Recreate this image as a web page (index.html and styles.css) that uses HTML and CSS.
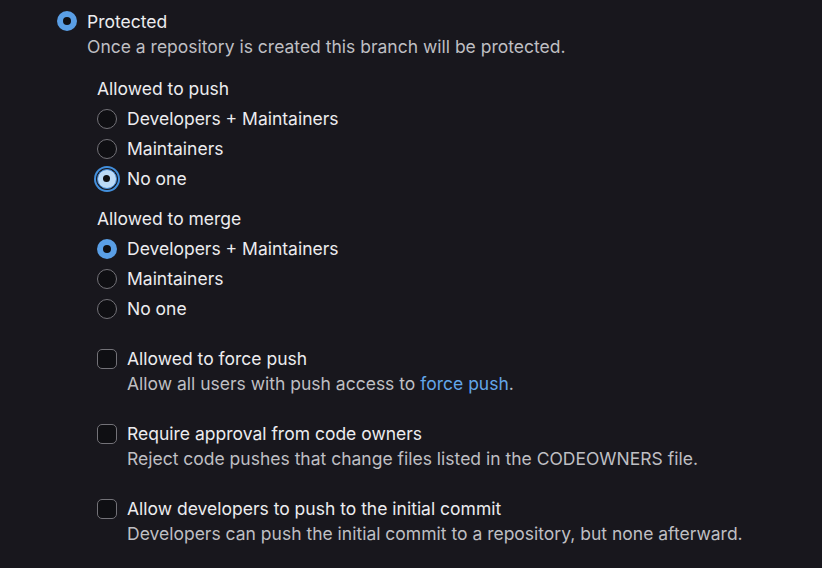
FILE: index.html
```html
<!DOCTYPE html>
<html>
<head>
<meta charset="utf-8">
<link rel="stylesheet" href="styles.css">
</head>
<body>
<div class="page">
  <p class="help top-line">Both developers and maintainers can push new commits, force push, or delete the branch.</p>

  <div class="option main">
    <span class="radio checked"></span>
    <div class="text">
      <div class="label">Protected</div>
      <div class="help">Once a repository is created this branch will be protected.</div>
    </div>
  </div>

  <div class="sub">
    <div class="heading">Allowed to push</div>
    <div class="option row"><span class="radio"></span><div class="label">Developers + Maintainers</div></div>
    <div class="option row"><span class="radio"></span><div class="label">Maintainers</div></div>
    <div class="option row"><span class="radio focused"></span><div class="label">No one</div></div>

    <div class="heading second">Allowed to merge</div>
    <div class="option row"><span class="radio checked"></span><div class="label">Developers + Maintainers</div></div>
    <div class="option row"><span class="radio"></span><div class="label">Maintainers</div></div>
    <div class="option row"><span class="radio"></span><div class="label">No one</div></div>

    <div class="option check-row">
      <span class="checkbox"></span>
      <div class="text">
        <div class="label">Allowed to force push</div>
        <div class="help">Allow all users with push access to <a class="link" href="#">force push</a>.</div>
      </div>
    </div>
    <div class="option check-row">
      <span class="checkbox"></span>
      <div class="text">
        <div class="label">Require approval from code owners</div>
        <div class="help">Reject code pushes that change files listed in the CODEOWNERS file.</div>
      </div>
    </div>
    <div class="option check-row">
      <span class="checkbox"></span>
      <div class="text">
        <div class="label">Allow developers to push to the initial commit</div>
        <div class="help">Developers can push the initial commit to a repository, but none afterward.</div>
      </div>
    </div>
  </div>
</div>
</body>
</html>
```
FILE: styles.css
```css
html, body {
  margin: 0;
  padding: 0;
  background: #18171d;
  overflow: hidden;
}
body {
  font-family: Inter, "Noto Sans", sans-serif;
  font-size: 17.5px;
  line-height: 25px;
  color: #ececef;
}
.page {
  padding-left: 57px;
}
.top-line {
  margin: -24px 0 0 30px;
  white-space: nowrap;
}
.help {
  color: #bfbfc3;
}
.link {
  color: #63a6e9;
  text-decoration: none;
}
.option {
  display: flex;
  align-items: flex-start;
  gap: 10px;
}
.main {
  margin-top: 7.5px;
}
.sub {
  padding-left: 40px;
}
.heading {
  margin-top: 17.5px;
}
.heading.second {
  margin-top: 15px;
}
.row {
  margin-top: 5px;
}
.check-row {
  margin-top: 25px;
}
.radio {
  flex: none;
  box-sizing: border-box;
  width: 20px;
  height: 20px;
  margin-top: 2.5px;
  border-radius: 50%;
  border: 1.5px solid #737278;
  background: #0f0f13;
  position: relative;
}
.radio.checked {
  border: none;
  background: #5a9fe6;
}
.radio.checked::after {
  content: "";
  position: absolute;
  left: 6px;
  top: 6px;
  width: 8px;
  height: 8px;
  border-radius: 50%;
  background: #0f0f13;
}
.radio.focused {
  border: 1.5px solid #3f87d6;
  background: #bcdaf6;
  box-shadow: 0 0 0 1px #18171d, 0 0 0 3px #428fdc;
}
.radio.focused::after {
  content: "";
  position: absolute;
  left: 5px;
  top: 5px;
  width: 7px;
  height: 7px;
  border-radius: 50%;
  background: #0f0f13;
}
.checkbox {
  flex: none;
  box-sizing: border-box;
  width: 20px;
  height: 20px;
  margin-top: 2.5px;
  border-radius: 5px;
  border: 1.5px solid #737278;
  background: #0f0f13;
}
```
